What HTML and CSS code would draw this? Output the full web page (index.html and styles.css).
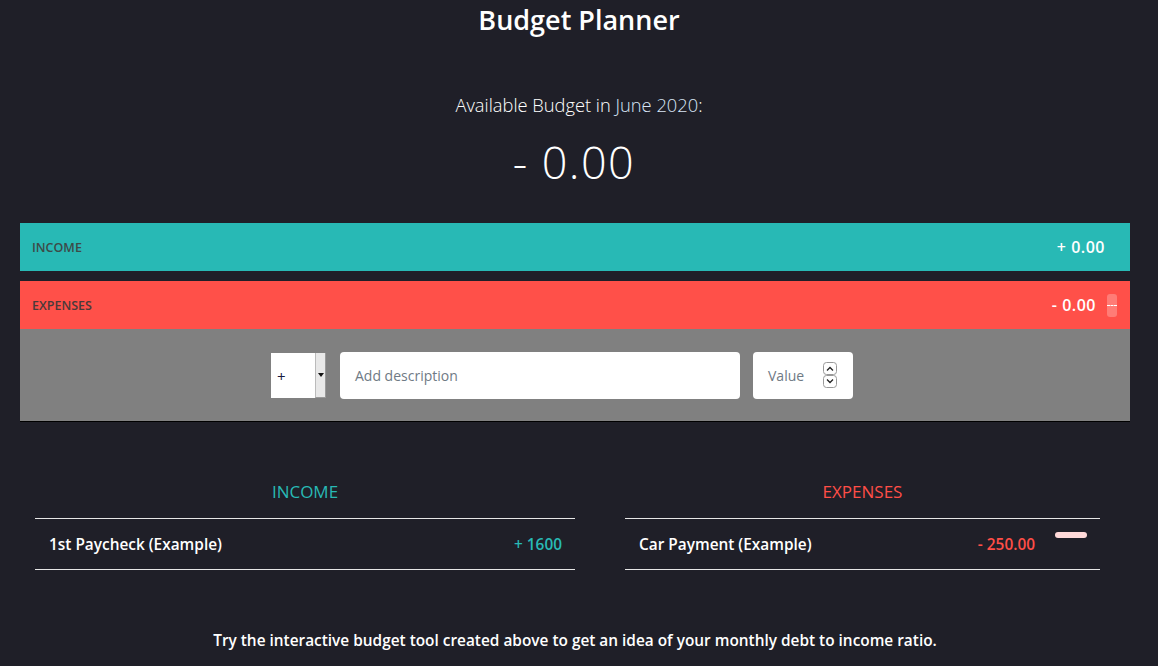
FILE: index.html
```html
<!DOCTYPE html>
<html>
<head>
<meta charset="utf-8">
<link rel="stylesheet" href="styles.css">
</head>
<body>
<h1 class="title">Budget Planner</h1>
<div class="top">
  <div class="budget-label">Available Budget in <span class="month">June 2020</span>:</div>
  <div class="budget-value">- 0.00</div>
</div>
<div class="wrap">
  <div class="bar bar-income">
    <span class="bar-label">INCOME</span>
    <span class="bar-right"><span class="bar-value">+ 0.00</span></span>
  </div>
  <div class="bar bar-expenses">
    <span class="bar-label">EXPENSES</span>
    <span class="bar-right"><span class="bar-value">- 0.00</span><span class="pct"><span class="pct-dash"></span></span></span>
  </div>
  <div class="add">
    <div class="select"><span class="select-text">+</span><span class="select-btn"><svg width="6" height="4" viewBox="0 0 6 4"><path d="M0 0h6L3 4z" fill="#111"/></svg></span></div>
    <div class="input desc">Add description</div>
    <div class="input val"><span>Value</span><span class="spin"><svg width="14" height="26" viewBox="0 0 14 26"><rect x="0.5" y="0.5" width="13" height="12" rx="3" fill="#fff" stroke="#999"/><rect x="0.5" y="13.5" width="13" height="12" rx="3" fill="#fff" stroke="#999"/><path d="M4 8.5l3-3 3 3" fill="none" stroke="#222" stroke-width="1.3"/><path d="M4 17.5l3 3 3-3" fill="none" stroke="#222" stroke-width="1.3"/></svg></span></div>
  </div>
</div>
<div class="lists">
  <div class="col col-income">
    <h2 class="col-title inc">INCOME</h2>
    <div class="row"><span class="row-desc">1st Paycheck (Example)</span><span class="row-val inc">+ 1600</span></div>
  </div>
  <div class="col col-expenses">
    <h2 class="col-title exp">EXPENSES</h2>
    <div class="row"><span class="row-desc">Car Payment (Example)</span><span class="row-right"><span class="row-val exp">- 250.00</span><span class="row-pill"></span></span></div>
  </div>
</div>
<p class="footer">Try the interactive budget tool created above to get an idea of your monthly debt to income ratio.</p>
</body>
</html>
```
FILE: styles.css
```css
* { box-sizing: border-box; }
html, body { margin: 0; padding: 0; }
body {
  background: #1f1f28;
  color: #fff;
  font-family: "Open Sans", "Noto Sans", sans-serif;
  width: 1158px;
  height: 666px;
  overflow: hidden;
}
.title {
  margin: 0;
  padding-top: 3px;
  text-align: center;
  font-size: 27px;
  font-weight: 600;
  line-height: 34px;
}
.top {
  text-align: center;
  padding-top: 56px;
}
.budget-label {
  font-size: 18.3px;
  font-weight: 300;
  line-height: 24px;
  color: #fff;
}
.month { color: #d8e6f7; }
.budget-value {
  font-size: 45px;
  font-weight: 300;
  line-height: 54px;
  margin-top: 18px;
  letter-spacing: 1.4px;
  padding-right: 10px;
}
.wrap {
  margin: 34px 28px 0 20px;
}
.bar {
  height: 48px;
  display: flex;
  align-items: center;
  justify-content: space-between;
  padding: 0 13px 0 12px;
}
.bar-income { background: #28b9b5; margin-bottom: 10px; padding-right: 25px; }
.bar-expenses { background: #ff5049; }
.bar-label {
  font-size: 12.5px;
  font-weight: 600;
  color: #3d4a48;
}
.bar-expenses .bar-label { color: #4a3a3a; }
.bar-right { display: flex; align-items: center; }
.bar-value {
  font-size: 16px;
  font-weight: 600;
  color: #fff;
  letter-spacing: 0.5px;
}
.pct {
  margin-left: 11px;
  width: 10px;
  height: 23px;
  border-radius: 3px;
  background: rgba(255,255,255,0.25);
  display: flex;
  align-items: center;
  justify-content: center;
}
.pct-dash {
  width: 10px;
  height: 0;
  border-top: 1px dashed #fff;
}
.add {
  background: #808080;
  height: 93px;
  border-bottom: 1px solid #000;
  display: flex;
  align-items: center;
  justify-content: center;
  padding-right: 26px;
}
.select {
  width: 55px;
  height: 45px;
  background: #fff;
  display: flex;
  margin-top: 1px;
}
.select-text {
  flex: 1;
  color: #1a1a40;
  font-size: 15px;
  padding-left: 6px;
  display: flex;
  align-items: center;
}
.select-btn {
  width: 11px;
  background: #e8e8e8;
  border-left: 1px solid #bbb;
  border-right: 1px solid #999;
  border-bottom: 1px solid #999;
  display: flex;
  align-items: center;
  justify-content: center;
}
.input {
  height: 47px;
  background: #fff;
  border-radius: 4px;
  color: #6f7a85;
  font-size: 14px;
  display: flex;
  align-items: center;
  padding-left: 15px;
}
.desc { width: 400px; margin-left: 14px; }
.val { width: 100px; margin-left: 13px; justify-content: space-between; padding-right: 16px; }
.spin { display: flex; }
.lists {
  display: flex;
  padding-top: 58px;
}
.col-income { width: 540px; margin-left: 35px; }
.col-expenses { width: 475px; margin-left: 50px; }
.col-title {
  margin: 0;
  text-align: center;
  font-size: 17px;
  font-weight: 400;
  line-height: 24px;
  padding-bottom: 14px;
  border-bottom: 1px solid #e6e6e6;
}
.col-title.inc { color: #28b9b5; }
.col-title.exp { color: #ff4e47; }
.row {
  height: 51px;
  border-bottom: 1px solid #e6e6e6;
  display: flex;
  align-items: center;
  justify-content: space-between;
  padding: 0 13px 0 14px;
  font-size: 15.4px;
  font-weight: 600;
}
.row-desc { color: #fff; }
.row-val.inc { color: #28b9b5; }
.row-val.exp { color: #ff4e47; }
.row-right { display: flex; align-items: center; }
.row-pill {
  width: 32px;
  height: 6px;
  border-radius: 3px;
  background: #ffd9d9;
  margin-left: 20px;
  position: relative;
  top: -9px;
}
.footer {
  margin: 59px 0 0;
  padding-right: 8px;
  text-align: center;
  font-size: 15.4px;
  font-weight: 600;
  line-height: 24px;
}
```
